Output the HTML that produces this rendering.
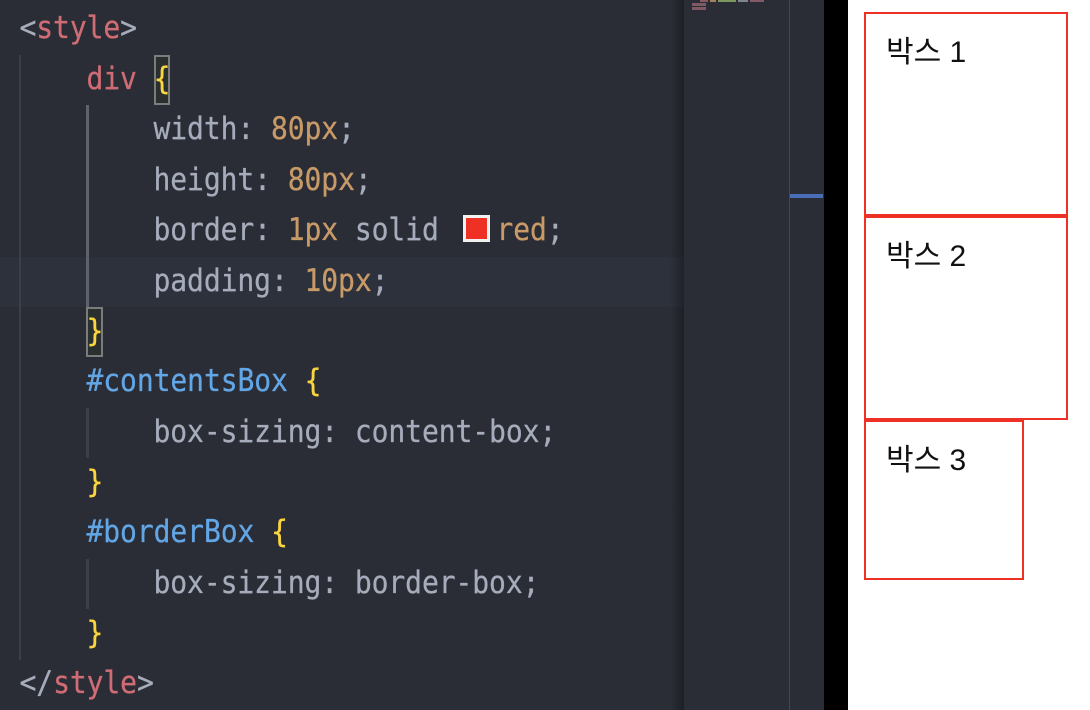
<!DOCTYPE html>
<html><head><meta charset="utf-8"><style>
html,body{margin:0;padding:0;background:#fff}
#r{position:relative;width:1090px;height:710px;overflow:hidden;background:#fff}
#r div{position:absolute}
#ed{left:0;top:0;width:824px;height:710px;background:#2a2d35}
.l{left:0;height:50px;font:28px/50px "DejaVu Sans Mono","Liberation Mono",monospace;letter-spacing:-.08px;color:#a6acbb;white-space:pre;transform:translateX(-.5px) scaleY(1.1);transform-origin:50% 50%;-webkit-text-stroke:.25px currentColor}
.k{color:#cf6c75}.n{color:#c89a68}.b{color:#fbd53f}.i{color:#62a6e6}
.box{left:864px;border:2px solid #ee3124;box-sizing:border-box;font:30px/44px "Liberation Sans","Noto Sans CJK KR",sans-serif;color:#111;padding:17px 20px}
</style></head><body><div id="r">
<div id="ed"></div>
<div style="left:0;top:257px;width:684px;height:50px;background:#2d313c"></div>
<div style="left:19px;top:55px;width:2px;height:605px;background:#3b3f4a"></div>
<div style="left:86px;top:105px;width:2.5px;height:202px;background:#5e626d"></div>
<div style="left:86px;top:408px;width:2.5px;height:50px;background:#3b3f4a"></div>
<div style="left:86px;top:559px;width:2.5px;height:50px;background:#3b3f4a"></div>
<div style="left:154px;top:55px;width:16px;height:50px;box-sizing:border-box;border:2px solid #7b7d7b;background:#2a302f"></div>
<div style="left:86px;top:307px;width:17px;height:50px;box-sizing:border-box;border:2px solid #7b7d7b;background:#2a302f"></div>
<div class="l" style="left:20px;top:3px">&lt;<span class="k">style</span>&gt;</div>
<div class="l" style="left:87px;top:54px"><span class="k">div</span> <span class="b">{</span></div>
<div class="l" style="left:154px;top:104px">width: <span class="n">80px</span>;</div>
<div class="l" style="left:154px;top:155px">height: <span class="n">80px</span>;</div>
<div class="l" style="left:154px;top:205px">border: <span class="n">1px</span> solid</div>
<div style="left:463px;top:215px;width:27px;height:27px;box-sizing:border-box;border:3px solid #f1f1f1;background:#ee3124"></div>
<div class="l" style="left:497px;top:205px"><span class="n">red</span>;</div>
<div class="l" style="left:154px;top:256px">padding: <span class="n">10px</span>;</div>
<div class="l" style="left:87px;top:306px"><span class="b">}</span></div>
<div class="l" style="left:87px;top:356px"><span class="i">#contentsBox</span> <span class="b">{</span></div>
<div class="l" style="left:154px;top:407px">box-sizing: content-box;</div>
<div class="l" style="left:87px;top:457px"><span class="b">}</span></div>
<div class="l" style="left:87px;top:507px"><span class="i">#borderBox</span> <span class="b">{</span></div>
<div class="l" style="left:154px;top:558px">box-sizing: border-box;</div>
<div class="l" style="left:87px;top:608px"><span class="b">}</span></div>
<div class="l" style="left:20px;top:658px">&lt;/<span class="k">style</span>&gt;</div>
<div style="left:670px;top:0;width:14px;height:710px;background:linear-gradient(90deg,rgba(20,21,25,0),rgba(20,21,25,.55))"></div>
<div style="left:700px;top:0;width:8px;height:2px;background:#8a5a62"></div>
<div style="left:710px;top:0;width:6px;height:2px;background:#a5845c"></div>
<div style="left:718px;top:0;width:18px;height:2px;background:#7d9560"></div>
<div style="left:738px;top:0;width:10px;height:2px;background:#7f838e"></div>
<div style="left:750px;top:0;width:14px;height:2px;background:#805a64"></div>
<div style="left:692px;top:3px;width:14px;height:3px;background:#7d5a64"></div>
<div style="left:692px;top:7px;width:14px;height:3px;background:#7d5a64"></div>
<div style="left:789px;top:0;width:1px;height:710px;background:#45484f"></div>
<div style="left:790px;top:194px;width:33px;height:4px;background:#4a6db8"></div>
<div style="left:824px;top:0;width:24px;height:710px;background:#000"></div>
<div class="box" style="top:12px;width:204px;height:204px">박스 1</div>
<div class="box" style="top:216px;width:204px;height:204px">박스 2</div>
<div class="box" style="top:420px;width:160px;height:160px">박스 3</div>
</div></body></html>
